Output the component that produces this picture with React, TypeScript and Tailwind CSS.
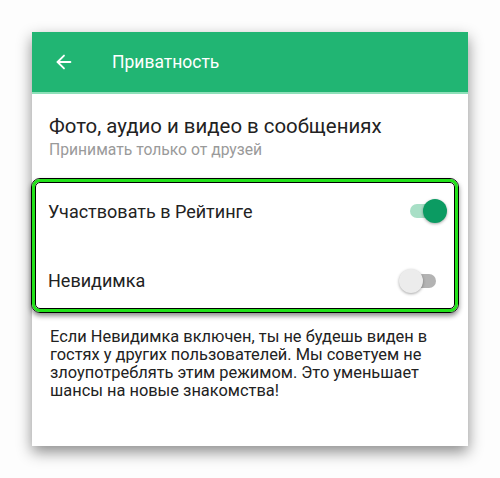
import { ArrowLeft } from "lucide-react";

function Toggle({ on }: { on: boolean }) {
  return (
    <div className="relative h-[24px] w-[40px]">
      <div
        className={`absolute left-[3px] right-[3px] top-[5px] h-[14px] rounded-full ${
          on ? "bg-[#a8dfc6]" : "bg-[#b3b3b3]"
        }`}
      />
      <div
        className={`absolute top-0 h-[24px] w-[24px] rounded-full shadow-[0_1px_3px_rgba(0,0,0,0.35)] ${
          on ? "right-0 bg-[#0b9b62]" : "left-0 bg-[#ececec]"
        }`}
      />
    </div>
  );
}

export default function App() {
  return (
    <div
      className="h-[478px] w-[500px] bg-[#fdfdfd] pt-[32px] pl-[32px]"
      style={{ fontFamily: "Roboto, 'Noto Sans', sans-serif" }}
    >
      <div className="h-[414px] w-[436px] bg-white shadow-[0_6px_14px_rgba(0,0,0,0.45)]">
        {/* Header */}
        <div className="flex h-[62px] items-center border-b-2 border-[#8ee0b9] bg-[#21b573] text-white">
          <ArrowLeft className="ml-[21px] h-[22px] w-[22px]" strokeWidth={2} />
          <span className="ml-[37px] text-[17.5px]">Приватность</span>
        </div>

        <div className="px-[17px] pt-[19px]">
          <p className="text-[20.4px] leading-[27px] text-[#222]">
            Фото, аудио и видео в сообщениях
          </p>
          <p className="text-[15.7px] leading-[20px] text-[#9a9a9a]">
            Принимать только от друзей
          </p>
        </div>

        {/* Highlighted toggles */}
        <div className="-ml-[1px] mt-[18px] w-[428px] rounded-[9px] border border-black shadow-[0_3px_5px_rgba(0,0,0,0.45)]">
          <div className="rounded-[8px] border-[3px] border-[#22e21a]">
            <div className="rounded-[5px] border border-black bg-white">
              <div className="flex h-[56px] items-center justify-between pl-[12px] pr-[7px]">
                <span className="text-[18px] text-[#222]">Участвовать в Рейтинге</span>
                <Toggle on />
              </div>
              <div className="flex h-[69px] items-center justify-between pl-[12px] pr-[15px] pt-[14px]">
                <span className="text-[18px] text-[#222]">Невидимка</span>
                <Toggle on={false} />
              </div>
            </div>
          </div>
        </div>

        <p className="px-[18px] pt-[15px] text-[16.4px] leading-[18px] text-[#222]">
          Если Невидимка включен, ты не будешь виден в гостях у других пользователей. Мы
          советуем не злоупотреблять этим режимом. Это уменьшает шансы на новые знакомства!
        </p>
      </div>
    </div>
  );
}
